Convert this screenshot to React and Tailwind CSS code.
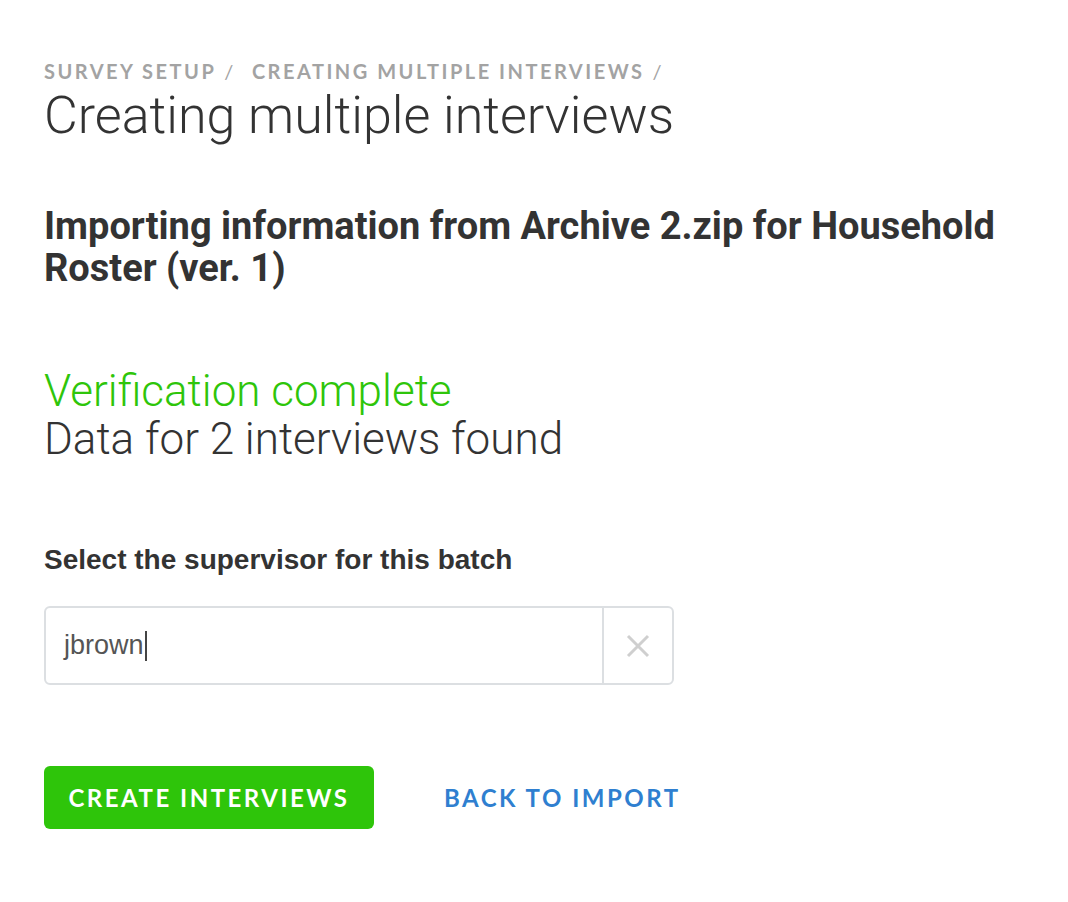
export default function App() {
  return (
    <div className="min-h-screen bg-white pl-[44px] pr-10 pt-[58px] font-['Roboto',sans-serif]">
      <nav className="flex items-center font-['Lato',sans-serif] text-[20px] font-bold uppercase leading-[26px] tracking-[2.5px] text-[#a3a3a3]">
        <span>Survey Setup</span>
        <span className="ml-[8px] font-normal">/</span>
        <span className="ml-[16px]">Creating multiple interviews</span>
        <span className="ml-[8px] font-normal">/</span>
      </nav>
      <h1 className="mt-[3px] text-[52px] font-light leading-[58px] text-[#333]">Creating multiple interviews</h1>

      <h2 className="mt-[60px] max-w-[990px] text-[38px] font-bold leading-[42px] text-[#333]">
        Importing information from Archive 2.zip for Household Roster (ver. 1)
      </h2>

      <div className="mt-[78px] text-[44px] font-light leading-[48px]">
        <div className="text-[#2ec50a]">Verification complete</div>
        <div className="text-[#333]">Data for 2 interviews found</div>
      </div>

      <label className="mt-[81px] block font-['Liberation_Sans',sans-serif] text-[28px] font-bold leading-[32px] text-[#333]">
        Select the supervisor for this batch
      </label>

      <div className="mt-[30px] flex h-[79px] w-[630px] items-stretch rounded-[6px] border-2 border-[#dcdfe2]">
        <div className="flex flex-1 items-center pl-[18px] font-['Liberation_Sans',sans-serif] text-[27px] text-[#555]">
          jbrown<span className="ml-[1px] inline-block h-[30px] w-[2px] bg-[#444]" />
        </div>
        <div className="flex w-[70px] items-center justify-center border-l-2 border-[#dcdfe2]">
          <svg width="26" height="26" viewBox="0 0 26 26" fill="none" stroke="#cfcfcf" strokeWidth="3">
            <path d="M3 3 L23 23 M23 3 L3 23" />
          </svg>
        </div>
      </div>

      <div className="mt-[81px] flex items-center gap-[70px]">
        <button className="h-[63px] w-[330px] rounded-[6px] bg-[#2ec50a] font-['Lato',sans-serif] text-[24px] font-bold uppercase tracking-[2.5px] text-white">
          Create interviews
        </button>
        <a className="font-['Lato',sans-serif] text-[24px] font-bold uppercase tracking-[2.5px] text-[#2f7fd0]">
          Back to import
        </a>
      </div>
    </div>
  );
}
